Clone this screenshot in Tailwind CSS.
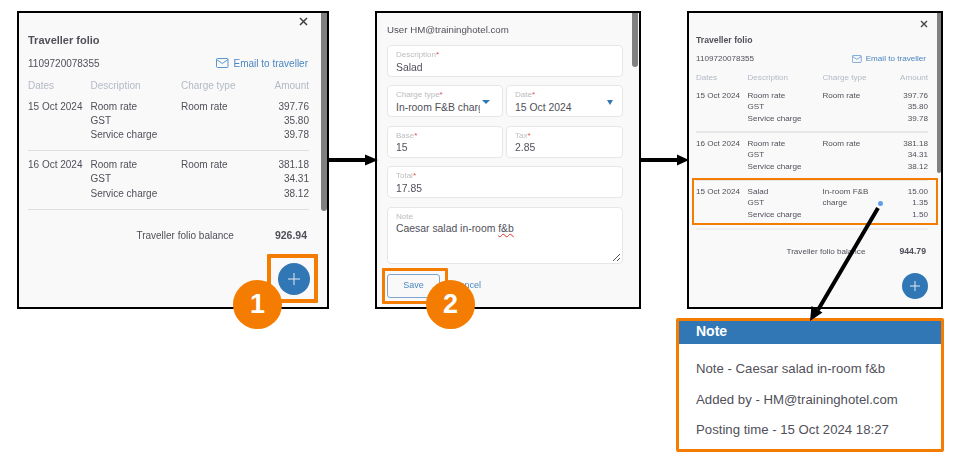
<!DOCTYPE html>
<html lang="en">
<head>
  <meta charset="UTF-8" />
  <title>Traveller folio note steps</title>
  <script src="https://cdn.jsdelivr.net/npm/@tailwindcss/browser@4"></script>
</head>
<body class="bg-white font-['Liberation_Sans',Arial,sans-serif] text-[#50505a]">
<div class="relative w-[960px] h-[464px] overflow-hidden bg-white">

  <!-- panel 1: folio -->
  <section class="absolute left-[17px] top-[11px] w-[312px] h-[298px] border-2 border-black bg-[#f9f9f9] text-[10px] pl-[9px] pr-[18px] [&>*]:blur-[0.3px]">
    <div class="absolute right-0 top-0 w-[6px] h-[198px] bg-[#808080] rounded-b-[3px]"></div>
    <svg class="absolute left-[280px] top-[4px] w-[9px] h-[9px]" viewBox="0 0 9 9" stroke="#444" stroke-width="1.6"><path d="M1 1l7 7M8 1l-7 7"/></svg>
    <h2 class="pt-[20px] font-bold text-[11px] leading-[14px]">Traveller folio</h2>
    <div class="flex justify-between items-center mt-[9px] h-[14px] pr-[1px]">
      <span>1109720078355</span>
      <span class="flex items-center gap-[5px] text-[#4a86c0]">
        <svg class="w-[13px] h-[10px]" viewBox="0 0 13 10" fill="none" stroke="#5a94cc" stroke-width="1"><rect x=".5" y=".5" width="11.5" height="9" rx="1"/><path d="M.5 1.5l5.8 4 5.8-4"/></svg>
        Email to traveller
      </span>
    </div>
    <div class="grid grid-cols-[62.5px_90.5px_1fr_auto] leading-[14px] mt-[9px] text-[#b3bac6]">
      <span>Dates</span><span>Description</span><span>Charge type</span><span>Amount</span>
    </div>
    <div class="grid grid-cols-[62.5px_90.5px_1fr_auto] leading-[14px] mt-[7px] pb-[8px] border-b border-[#dedede]">
      <span>15 Oct 2024</span>
      <span>Room rate<br>GST<br>Service charge</span>
      <span>Room rate</span>
      <span class="text-right">397.76<br>35.80<br>39.78</span>
    </div>
    <div class="grid grid-cols-[62.5px_90.5px_1fr_auto] leading-[14.3px] mt-[7px] pb-[8px] border-b border-[#dedede]">
      <span>16 Oct 2024</span>
      <span>Room rate<br>GST<br>Service charge</span>
      <span>Room rate</span>
      <span class="text-right">381.18<br>34.31<br>38.12</span>
    </div>
    <div class="flex justify-end items-center mt-[19px] h-[14px] pr-[2px]">
      <span>Traveller folio balance</span>
      <span class="ml-[41px] font-bold text-[10.5px]">926.94</span>
    </div>
    <div class="absolute left-[259px] top-[250px] w-[32px] h-[32px] rounded-full bg-[#3277b5] flex items-center justify-center">
      <svg class="w-[12px] h-[12px]" viewBox="0 0 12 12" stroke="#dfeaf5" stroke-width="1"><path d="M6 0v12M0 6h12"/></svg>
    </div>
  </section>

  <!-- panel 2: add charge form -->
  <section class="absolute left-[375px] top-[11px] w-[266px] h-[298px] border-2 border-black bg-[#f9f9f9] pl-[10px] pr-[16px] [&>*]:blur-[0.3px]">
    <div class="absolute right-[1px] top-0 w-[6px] h-[54px] bg-[#808080] rounded-b-[3px]"></div>
    <p class="text-[9.7px] leading-[14px] pt-[10px]">User HM@traininghotel.com</p>
    <div class="flex flex-col gap-[8.4px] mt-[8px] text-[10.4px] leading-[13px]">
      <div class="h-[32px] bg-white border border-[#e6e6e6] rounded-[4px] px-[8px] pt-[4px]">
        <div class="text-[8px] leading-[9px] text-[#bdbdbd]">Description<span class="text-[#d9534f]">*</span></div>
        <div class="mt-[1.5px]">Salad</div>
      </div>
      <div class="grid grid-cols-[116px_1fr] gap-[3px]">
        <div class="relative h-[32px] bg-white border border-[#e6e6e6] rounded-[4px] px-[8px] pt-[4px]">
          <div class="text-[8px] leading-[9px] text-[#bdbdbd]">Charge type<span class="text-[#d9534f]">*</span></div>
          <div class="mt-[1.5px] w-[84px] overflow-hidden whitespace-nowrap">In-room F&amp;B charge</div>
          <div class="absolute right-[12px] top-[14px] w-0 h-0 border-x-[4px] border-x-transparent border-t-[4px] border-t-[#3277b5]"></div>
        </div>
        <div class="relative h-[32px] bg-white border border-[#e6e6e6] rounded-[4px] px-[8px] pt-[4px]">
          <div class="text-[8px] leading-[9px] text-[#bdbdbd]">Date<span class="text-[#d9534f]">*</span></div>
          <div class="mt-[1.5px]">15 Oct 2024</div>
          <div class="absolute right-[9px] top-[14px] w-0 h-0 border-x-[3px] border-x-transparent border-t-[5px] border-t-[#3277b5]"></div>
        </div>
      </div>
      <div class="grid grid-cols-[116px_1fr] gap-[3px]">
        <div class="h-[32px] bg-white border border-[#e6e6e6] rounded-[4px] px-[8px] pt-[4px]">
          <div class="text-[8px] leading-[9px] text-[#bdbdbd]">Base<span class="text-[#d9534f]">*</span></div>
          <div class="mt-[1.5px]">15</div>
        </div>
        <div class="h-[32px] bg-white border border-[#e6e6e6] rounded-[4px] px-[8px] pt-[4px]">
          <div class="text-[8px] leading-[9px] text-[#bdbdbd]">Tax<span class="text-[#d9534f]">*</span></div>
          <div class="mt-[1.5px]">2.85</div>
        </div>
      </div>
      <div class="h-[32px] bg-white border border-[#e6e6e6] rounded-[4px] px-[8px] pt-[4px]">
        <div class="text-[8px] leading-[9px] text-[#bdbdbd]">Total<span class="text-[#d9534f]">*</span></div>
        <div class="mt-[1.5px]">17.85</div>
      </div>
      <div class="relative h-[57px] bg-white border border-[#e6e6e6] rounded-[4px] px-[8px] pt-[4px]">
        <div class="text-[8px] leading-[9px] text-[#bdbdbd]">Note</div>
        <div class="mt-[1.5px]">Caesar salad in-room <span class="underline decoration-wavy decoration-[#d9342b] decoration-[0.7px]">f&amp;b</span></div>
        <svg class="absolute right-[1px] bottom-[1px] w-[9px] h-[9px]" viewBox="0 0 9 9" stroke="#555" stroke-width="1"><path d="M1 8l7-7M5 8l3-3"/></svg>
      </div>
    </div>
    <div class="flex items-center mt-[10px] text-[9px]">
      <button class="w-[53px] h-[24px] border border-[#7ea6cc] rounded-[3px] bg-[#f9f9f9] text-[#4a86c0]">Save</button>
      <span class="ml-[13px] text-[#4a86c0]">Cancel</span>
    </div>
  </section>

  <!-- panel 3: folio with new charge -->
  <section class="absolute left-[687px] top-[11px] w-[256px] h-[298px] border-2 border-black bg-[#f9f9f9] text-[8.1px] pl-[7px] pr-[13px] [&>*]:blur-[0.3px]">
    <div class="absolute right-0 top-0 w-[4px] h-[160px] bg-[#808080] rounded-b-[2px]"></div>
    <svg class="absolute left-[231px] top-[7px] w-[8px] h-[8px]" viewBox="0 0 8 8" stroke="#444" stroke-width="1.4"><path d="M1 1l6 6M7 1l-6 6"/></svg>
    <h2 class="pt-[21px] font-bold text-[8.7px] leading-[12px]">Traveller folio</h2>
    <div class="flex justify-between items-center mt-[7px] h-[12px] pr-[2px]">
      <span>1109720078355</span>
      <span class="flex items-center gap-[4px] text-[#4a86c0]">
        <svg class="w-[10px] h-[8px]" viewBox="0 0 13 10" fill="none" stroke="#5a94cc" stroke-width="1"><rect x=".5" y=".5" width="11.5" height="9" rx="1"/><path d="M.5 1.5l5.8 4 5.8-4"/></svg>
        Email to traveller
      </span>
    </div>
    <div class="grid grid-cols-[51.5px_75px_1fr_auto] leading-[12px] mt-[6.5px] text-[#b3bac6]">
      <span>Dates</span><span>Description</span><span>Charge type</span><span>Amount</span>
    </div>
    <div class="grid grid-cols-[51.5px_75px_1fr_auto] leading-[11.7px] mt-[6px] pb-[6px] border-b-2 border-[#e6e6e6]">
      <span>15 Oct 2024</span>
      <span>Room rate<br>GST<br>Service charge</span>
      <span>Room rate</span>
      <span class="text-right">397.76<br>35.80<br>39.78</span>
    </div>
    <div class="grid grid-cols-[51.5px_75px_1fr_auto] leading-[11.7px] mt-[5px] pb-[6px] border-b-2 border-[#e6e6e6]">
      <span>16 Oct 2024</span>
      <span>Room rate<br>GST<br>Service charge</span>
      <span>Room rate</span>
      <span class="text-right">381.18<br>34.31<br>38.12</span>
    </div>
    <div class="grid grid-cols-[51.5px_75px_1fr_auto] leading-[11.7px] mt-[5px] pb-[7px] border-b-2 border-[#eeeeee]">
      <span>15 Oct 2024</span>
      <span>Salad<br>GST<br>Service charge</span>
      <span>In-room F&amp;B<br>charge</span>
      <span class="text-right">15.00<br>1.35<br>1.50</span>
    </div>
    <div class="flex justify-end items-center mt-[16px] h-[12px] pr-[2px]">
      <span>Traveller folio balance</span>
      <span class="ml-[34px] font-bold text-[8.7px]">944.79</span>
    </div>
    <div class="absolute left-[213px] top-[260px] w-[26px] h-[26px] rounded-full bg-[#3277b5] flex items-center justify-center">
      <svg class="w-[10px] h-[10px]" viewBox="0 0 10 10" stroke="#dfeaf5" stroke-width="1"><path d="M5 0v10M0 5h10"/></svg>
    </div>
    <div class="absolute left-[188.500px] top-[187.500px] w-[5px] h-[5px] rounded-full bg-[#5f9fea]"></div>
  </section>

  <!-- note popup -->
  <section class="absolute left-[676px] top-[318px] w-[268px] h-[134px] border-[3px] border-[#f47c00] rounded-[2px] bg-white">
    <h3 class="h-[23px] bg-[#3277b5] text-white font-bold text-[14px] leading-[20px] pl-[17px]">Note</h3>
    <div class="pl-[17px] pt-[18px] text-[13.2px] leading-[14px] flex flex-col gap-[16.5px]">
      <p>Note - Caesar salad in-room f&amp;b</p>
      <p>Added by - HM@traininghotel.com</p>
      <p>Posting time - 15 Oct 2024 18:27</p>
    </div>
  </section>

  <!-- orange highlight boxes and step numbers -->
  <div class="absolute left-[267px] top-[254px] w-[51px] h-[49px] border-[4px] border-[#f47c00] rounded-[1px]"></div>
  <div class="absolute left-[382px] top-[268px] w-[66px] h-[36px] border-[3px] border-[#f47c00] rounded-[1px]"></div>
  <div class="absolute left-[692px] top-[178px] w-[246px] h-[47px] border-2 border-[#f47c00]"></div>
  <div class="absolute left-[233px] top-[280px] w-[49px] h-[49px] rounded-full bg-[#f47c00] text-white font-bold text-[27px] flex items-center justify-center">1</div>
  <div class="absolute left-[426px] top-[280px] w-[49px] h-[49px] rounded-full bg-[#f47c00] text-white font-bold text-[27px] flex items-center justify-center">2</div>

  <!-- connector arrows -->
  <svg class="absolute left-0 top-0 w-[960px] h-[464px] pointer-events-none" viewBox="0 0 960 464">
    <path d="M329 160h37M641 160h37M878 208L818 310" stroke="#000" stroke-width="4" fill="none"/>
    <path d="M365 154.500L378 160L365 165.500zM677 154.500L689 160L677 165.500zM810 321L811.500 306L822.500 312.500z" fill="#000"/>
  </svg>
</div>
</body>
</html>
